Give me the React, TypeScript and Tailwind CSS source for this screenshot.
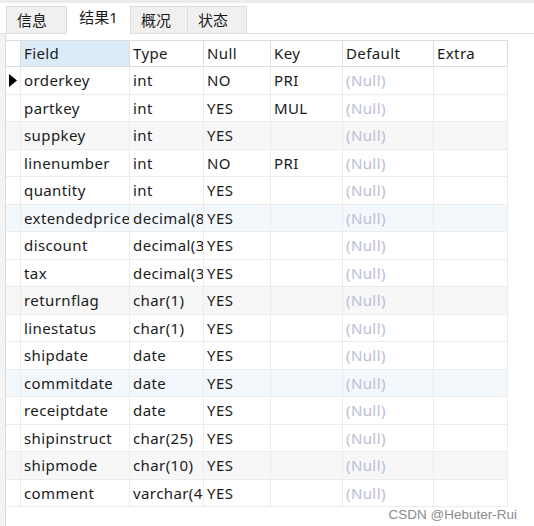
import React from 'react';

const rows = [
  ['orderkey', 'int', 'NO', 'PRI'],
  ['partkey', 'int', 'YES', 'MUL'],
  ['suppkey', 'int', 'YES', ''],
  ['linenumber', 'int', 'NO', 'PRI'],
  ['quantity', 'int', 'YES', ''],
  ['extendedprice', 'decimal(8,2)', 'YES', ''],
  ['discount', 'decimal(3,2)', 'YES', ''],
  ['tax', 'decimal(3,2)', 'YES', ''],
  ['returnflag', 'char(1)', 'YES', ''],
  ['linestatus', 'char(1)', 'YES', ''],
  ['shipdate', 'date', 'YES', ''],
  ['commitdate', 'date', 'YES', ''],
  ['receiptdate', 'date', 'YES', ''],
  ['shipinstruct', 'char(25)', 'YES', ''],
  ['shipmode', 'char(10)', 'YES', ''],
  ['comment', 'varchar(44)', 'YES', ''],
];

const tabs = ['信息', '结果1', '概况', '状态'];

const cols = 'grid grid-cols-[15px_109px_74px_67px_72px_91px_74px]';

function rowBg(i: number) {
  if (i % 6 === 2) return 'bg-[#f7f7f7]';
  if (i % 6 === 5) return 'bg-[#f3f8fd]';
  return 'bg-white';
}

export default function App() {
  return (
    <div
      className="w-[534px] h-[526px] overflow-hidden bg-white text-[#1a1a1a]"
      style={{ fontFamily: '"Noto Sans", "Noto Sans CJK SC", sans-serif' }}
    >
      <div className="h-[3px] bg-[#ececec]" />
      <div className="flex items-end h-[31px] pl-[6px] border-b border-[#dedede] bg-white">
        {tabs.map((t, i) =>
          i === 1 ? (
            <div
              key={t}
              className="w-[63px] h-[31px] -mb-px bg-white flex items-center justify-center text-[15px] pb-[2px]"
            >
              {t}
            </div>
          ) : (
            <div
              key={t}
              className={`h-[27px] bg-[#f0f0f0] border border-b-0 border-[#dcdcdc] flex items-center pl-[10px] text-[15px] ${
                i === 0 ? 'w-[61px]' : i === 2 ? 'w-[58px]' : 'w-[59px] border-l-0'
              }`}
            >
              {t}
            </div>
          )
        )}
      </div>
      <div className="flex h-[492px]">
        <div className="w-[6px] bg-[#f4f4f4] border-r border-[#dcdcdc]" />
        <div className="pt-[6px]">
          <div className={`${cols} h-[27px] text-[15px] tracking-[0.4px]`}>
            <div className="border-r border-b border-t border-[#dcdcdc]" />
            {['Field', 'Type', 'Null', 'Key', 'Default', 'Extra'].map((h, i) => (
              <div
                key={h}
                className={`border-r border-b border-t border-[#dcdcdc] pl-[3px] flex items-center ${
                  i === 0 ? 'bg-[#dcebf8]' : 'bg-white'
                }`}
              >
                {h}
              </div>
            ))}
          </div>
          {rows.map((r, i) => (
            <div key={r[0]} className={`${cols} h-[27.5px] text-[15px] tracking-[0.4px] ${rowBg(i)}`}>
              <div className="border-r border-b border-[#ececec] flex items-center pl-[3px]">
                {i === 0 && (
                  <svg width="8" height="13" viewBox="0 0 8 13">
                    <polygon points="0,0 8,6.5 0,13" fill="#000" />
                  </svg>
                )}
              </div>
              {r.map((c, j) => (
                <div
                  key={j}
                  className="border-r border-b border-[#ececec] pl-[3px] flex items-center overflow-hidden whitespace-nowrap"
                >
                  <span className="block overflow-hidden whitespace-nowrap">{c}</span>
                </div>
              ))}
              <div className="border-r border-b border-[#ececec] pl-[3px] flex items-center text-[#b9bdd8]">
                (Null)
              </div>
              <div className="border-r border-b border-[#ececec]" />
            </div>
          ))}
          <div className="flex justify-end -mr-[9px] -mt-[2px]">
            <span
              className="text-[13.5px] text-[#8c8c8c]"
              style={{ fontFamily: '"Liberation Sans", Arial, sans-serif' }}
            >
              CSDN @Hebuter-Rui
            </span>
          </div>
        </div>
      </div>
    </div>
  );
}
